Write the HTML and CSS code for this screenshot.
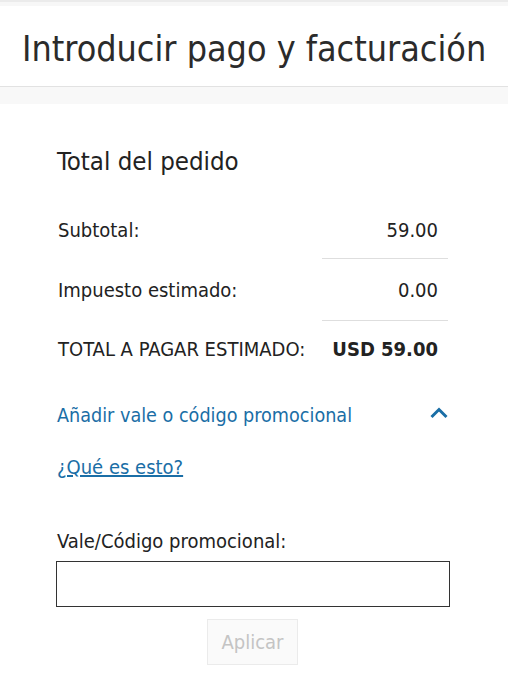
FILE: index.html
```html
<!DOCTYPE html>
<html lang="es">

<head>
    <meta charset="UTF-8">
    <meta name="viewport" content="width=device-width, initial-scale=1.0">
    <title>Introducir pago y facturación</title>
    <link rel="stylesheet" href="styles.css">
</head>

<body>
    <div class="franja"></div>
    <header class="cabecera">
        <h1>Introducir pago y facturación</h1>
    </header>
    <div class="separador"></div>

    <section class="pedido">
        <h2>Total del pedido</h2>
        <table class="resumen">
            <tr>
                <td class="etiqueta">Subtotal:</td>
                <td class="valor">59.00</td>
            </tr>
            <tr class="impuesto">
                <td class="etiqueta">Impuesto estimado:</td>
                <td class="valor">0.00</td>
            </tr>
            <tr class="total">
                <td class="etiqueta">TOTAL A PAGAR ESTIMADO:</td>
                <td class="valor"><strong>USD 59.00</strong></td>
            </tr>
        </table>

        <div class="promo">
            <a class="promo-titulo" href="#">Añadir vale o código promocional</a>
            <svg class="chevron" width="18" height="12" viewBox="0 0 18 12">
                <path d="M1.5 10 L9 2.5 L16.5 10" fill="none" stroke="#1a6ea6" stroke-width="3" />
            </svg>
        </div>
        <a class="que-es" href="#">¿Qué es esto?</a>

        <label class="campo-label" for="codigo">Vale/Código promocional:</label>
        <input id="codigo" class="campo" type="text">
        <div class="acciones">
            <button class="btn-aplicar" disabled>Aplicar</button>
        </div>
    </section>
</body>

</html>
```

FILE: styles.css
```css
* {
    margin: 0;
    padding: 0;
    box-sizing: border-box;
}

body {
    font-family: "DejaVu Sans", Verdana, sans-serif;
    font-stretch: condensed;
    color: #222;
    background-color: #fff;
}

.franja {
    height: 6px;
    background: linear-gradient(#ebebeb 0, #ebebeb 2px, #f7f7f7 2px);
}

.cabecera {
    padding: 22px 0 16px 22px;
    border-bottom: 1px solid #e2e2e2;
}

.cabecera h1 {
    font-size: 35.6px;
    line-height: 42px;
    font-weight: normal;
    color: #2b2b2b;
}

.separador {
    height: 17px;
    background-color: #f8f8f8;
}

.pedido {
    padding: 42px 60px 0 57px;
}

.pedido h2 {
    font-size: 25.6px;
    line-height: 30px;
    font-weight: normal;
    color: #222;
    margin-bottom: 23px;
}

.resumen {
    width: 100%;
    border-collapse: collapse;
    font-size: 20px;
    line-height: 24px;
}

.resumen td {
    padding: 19px 0 16px 0;
}

.resumen .etiqueta {
    padding-left: 1px;
}

.resumen .valor {
    width: 126px;
    text-align: right;
    padding-right: 10px;
    border-bottom: 1px solid #dedede;
}

.resumen .impuesto td {
    padding-bottom: 18px;
}

.resumen .total td {
    padding-top: 16px;
    border-bottom: none;
}

.resumen strong {
    font-weight: bold;
    color: #222;
}

.promo {
    display: flex;
    justify-content: space-between;
    align-items: center;
    margin-top: 27px;
}

.promo-titulo {
    font-size: 19.6px;
    line-height: 24px;
    color: #1a6ea6;
    text-decoration: none;
}

.chevron {
    margin-top: -6px;
}

.que-es {
    display: inline-block;
    margin-top: 27px;
    font-size: 20px;
    line-height: 24px;
    color: #1a6ea6;
}

.campo-label {
    display: block;
    margin-top: 50px;
    font-size: 20px;
    line-height: 24px;
    color: #222;
}

.campo {
    display: block;
    width: 394px;
    height: 46px;
    margin-top: 8px;
    margin-left: -1px;
    border: 1px solid #333;
    border-radius: 0;
    font-size: 18px;
    padding: 0 8px;
}

.acciones {
    display: flex;
    justify-content: center;
    margin-top: 12px;
}

.btn-aplicar {
    width: 91px;
    height: 46px;
    font-family: "DejaVu Sans", Verdana, sans-serif;
    font-stretch: condensed;
    font-size: 20px;
    color: #c4c4c4;
    background-color: #fafafa;
    border: 1px solid #ebebeb;
    border-radius: 0;
}
```
